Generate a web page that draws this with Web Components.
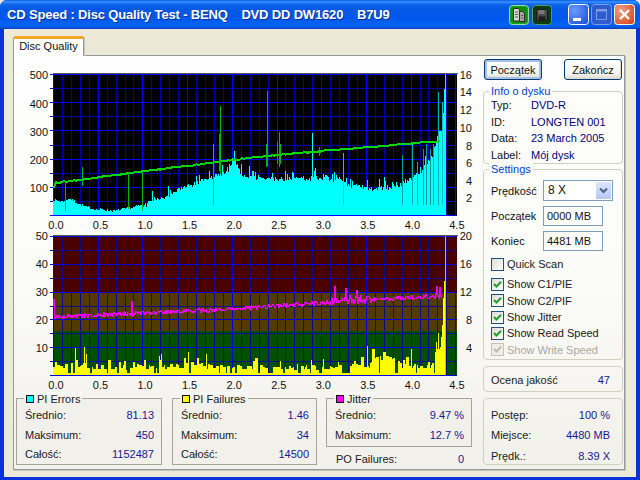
<!DOCTYPE html>
<html lang="pl"><head><meta charset="utf-8"><title>CD Speed</title>
<style>
html,body{margin:0;padding:0;width:640px;height:480px;overflow:hidden;background:#ECE9D8}
body{font:11px "Liberation Sans",Arial,sans-serif;color:#000}
</style></head><body>
<xp-window>
  <xp-tabs label="Disc Quality">
    <div style="display:grid;grid-template-columns:467px 140px;height:100%">
      <div style="padding-top:8px">
        <disc-chart kind="pi"></disc-chart>
        <disc-chart kind="pif"></disc-chart>
        <div style="display:flex;margin-top:6px;align-items:flex-start">
          <stat-group label="PI Errors" swatch="#00ffff" style="width:146px;height:67px">
            <kv-row k="Średnio:" v="81.13"></kv-row><kv-row k="Maksimum:" v="450"></kv-row><kv-row k="Całość:" v="1152487"></kv-row>
          </stat-group>
          <stat-group label="PI Failures" swatch="#ffff00" style="width:145px;height:67px;margin-left:10px">
            <kv-row k="Średnio:" v="1.46"></kv-row><kv-row k="Maksimum:" v="34"></kv-row><kv-row k="Całość:" v="14500"></kv-row>
          </stat-group>
          <div style="margin-left:9px;width:146px">
            <stat-group label="Jitter" swatch="#ff00ff" style="height:49px">
              <kv-row k="Średnio:" v="9.47 %"></kv-row><kv-row k="Maksimum:" v="12.7 %"></kv-row>
            </stat-group>
            <kv-row k="PO Failures:" v="0" style="margin:4px 8px 0 10px"></kv-row>
          </div>
        </div>
      </div>
      <div>
        <div style="display:flex;justify-content:space-between;padding:0 1px;height:21px">
          <xp-button default style="width:58px">Początek</xp-button>
          <xp-button style="width:58px">Zakończ</xp-button>
        </div>
        <round-group label="Info o dysku" style="height:73px;margin-top:11px;--pt:5px">
          <info-row k="Typ:" v="DVD-R"></info-row><info-row k="ID:" v="LONGTEN 001"></info-row>
          <info-row k="Data:" v="23 March 2005"></info-row><info-row k="Label:" v="Mój dysk"></info-row>
        </round-group>
        <round-group label="Settings" style="height:191px;margin-top:5px;--pt:10px">
          <setting-row label="Prędkość"><xp-select style="width:70px" value="8 X"></xp-select></setting-row>
          <setting-row label="Początek" style="margin-top:5px"><xp-input style="width:60px" value="0000 MB"></xp-input></setting-row>
          <setting-row label="Koniec" style="margin-top:5px"><xp-input style="width:60px" value="4481 MB"></xp-input></setting-row>
          <xp-check style="margin-top:5px">Quick Scan</xp-check>
          <div style="margin-top:4px">
            <xp-check checked>Show C1/PIE</xp-check><xp-check checked>Show C2/PIF</xp-check>
            <xp-check checked>Show Jitter</xp-check><xp-check checked>Show Read Speed</xp-check>
            <xp-check checked disabled>Show Write Speed</xp-check>
          </div>
        </round-group>
        <round-group style="height:26px;margin-top:6px;--pt:5px">
          <kv-row k="Ocena jakość" v="47" style="margin-right:5px;height:16px"></kv-row>
        </round-group>
        <round-group style="height:67px;margin-top:6px;--pt:5.5px">
          <kv-row k="Postęp:" v="100 %" style="margin-right:5px;height:20.5px"></kv-row>
          <kv-row k="Miejsce:" v="4480 MB" style="margin-right:5px;height:20.5px"></kv-row>
          <kv-row k="Prędk.:" v="8.39 X" style="margin-right:5px;height:20.5px"></kv-row>
        </round-group>
      </div>
    </div>
  </xp-tabs>
</xp-window>
<script>
const FONT='"Liberation Sans",Arial,sans-serif';
function def(name,html,init){
  customElements.define(name,class extends HTMLElement{
    constructor(){super();this.attachShadow({mode:'open'});}
    connectedCallback(){
      if(!this._r){this._r=1;this.shadowRoot.innerHTML=typeof html==='function'?html(this):html;}
      if(init)init(this);
    }
  });
}
def('xp-window',()=>`<style>
:host{display:flex;flex-direction:column;width:640px;height:480px;background:#0831D9;border-radius:7px 7px 0 0;overflow:hidden;box-sizing:border-box}
.t{height:29px;flex:none;display:flex;align-items:center;padding:0 5px 0 7px;box-sizing:border-box;color:#fff;
 background:linear-gradient(#0A5BE8 0,#3A93FF 2px,#0F66EE 4px,#0458E4 9px,#0058EC 19px,#0265F3 25px,#0B50D8 28px,#0636B8 29px)}
.n{font:bold 13px "Liberation Sans",Arial,sans-serif;white-space:pre;flex:1;text-shadow:1px 1px 0 #0F2F9E;letter-spacing:-.17px}
svg{display:block}
.c{flex:1;margin:0 4px 3px;background:#ECE9D8;min-height:0}
.ic{display:flex;gap:3px;margin-right:16px}
.wb{display:flex;gap:2px}
</style>
<div class="t"><span class="n">CD Speed : Disc Quality Test - BENQ    DVD DD DW1620    B7U9</span>
<span class="ic">
<svg width="20" height="20" viewBox="0 0 20 20"><rect x=".5" y=".5" width="19" height="19" rx="3" fill="#1CA01E" stroke="#9BDCA0"/><rect x="2" y="2" width="16" height="16" rx="2" fill="#0F8E12"/><path d="M4.500 3.500h5l1 1.500v11h-6z" fill="#D8D8D0" stroke="#2A2A2A"/><path d="M10.500 6.500h3l2 2v8h-5z" fill="#A8A8A0" stroke="#2A2A2A"/><path d="M6 7h3M6 9.500h3M6 12h3M12 10.500h2M12 13h2" stroke="#555"/></svg>
<svg width="20" height="20" viewBox="0 0 20 20"><rect x=".5" y=".5" width="19" height="19" rx="3" fill="#0A3D10" stroke="#5E9A68"/><path d="M4.500 4.500h10l1 1v10h-11z" fill="#4A4A4A" stroke="#1A1A1A"/><rect x="6.500" y="5" width="6" height="4" fill="#7A7A7A"/><rect x="6.500" y="11.500" width="7" height="4" fill="#1E1E1E"/></svg>
</span>
<span class="wb">
<svg width="21" height="21" viewBox="0 0 21 21"><defs><radialGradient id="b" cx=".3" cy=".3" r=".9"><stop offset="0" stop-color="#6D9CF8"/><stop offset="1" stop-color="#1E4FD8"/></radialGradient><radialGradient id="r" cx=".3" cy=".3" r=".9"><stop offset="0" stop-color="#F0A080"/><stop offset="1" stop-color="#D8411A"/></radialGradient></defs><rect x=".5" y=".5" width="20" height="20" rx="3" fill="url(#b)" stroke="#fff"/><rect x="5" y="14" width="8" height="3" fill="#fff"/></svg>
<svg width="21" height="21" viewBox="0 0 21 21"><rect x=".5" y=".5" width="20" height="20" rx="3" fill="#2F5BD0" stroke="#7E9EE8"/><path d="M5.500 5.500h10v10h-10z" fill="none" stroke="#7F9BE4"/><path d="M5 6.500h11" stroke="#7F9BE4" stroke-width="2"/></svg>
<svg width="21" height="21" viewBox="0 0 21 21"><rect x=".5" y=".5" width="20" height="20" rx="3" fill="url(#r)" stroke="#fff"/><path d="M6 6l9 9M15 6l-9 9" stroke="#fff" stroke-width="2.400"/></svg>
</span></div>
<div class="c"><slot></slot></div>`);

def('xp-tabs',h=>`<style>
:host{display:flex;flex-direction:column;height:100%;padding:7px 11px 7px 9px;box-sizing:border-box}
.tab{align-self:flex-start;height:20px;width:71px;box-sizing:border-box;background:#fff;border:1px solid #919B9C;border-bottom:0;border-top:3px solid #F5A623;border-radius:3px 3px 0 0;text-align:center;line-height:15px;position:relative;z-index:1;margin-bottom:-1px;color:#111;box-shadow:1px 0 0 #C8C6B8}
.p{flex:1;min-height:0;box-sizing:border-box;border:1px solid #919B9C;border-bottom-color:#8F9A9B;padding:3px 1px 2px 2px;background:linear-gradient(#FEFEFE 0,#FBFBF9 55%,#F1F0EA 100%);box-shadow:1px 1px 0 #C4C2B4}
</style><div class="tab">${h.getAttribute('label')||''}</div><div class="p"><slot></slot></div>`);

function rng(seed){return()=>{seed|=0;seed=seed+0x6D2B79F5|0;let t=Math.imul(seed^seed>>>15,1|seed);t=t+Math.imul(t^t>>>7,61|t)^t;return((t^t>>>14)>>>0)/4294967296}}
function interp(pts,x){if(x<=pts[0][0])return pts[0][1];for(let i=1;i<pts.length;i++){if(x<=pts[i][0]){const a=pts[i-1],b=pts[i];return a[1]+(b[1]-a[1])*(x-a[0])/(b[0]-a[0])}}return pts[pts.length-1][1]}

function chartSvg(kind){
  const pi=kind==='pi';
  const X0=53,XU=89.4,XE=457,Y0=pi?75:237,Y1=pi?216:376,H=Y1-Y0;
  const top=pi?68:233,ht=pi?165:160;
  let minor='',major='';
  for(let i=0;i<=45;i++){const x=Math.round(X0+i*8.94)+.5;
    if(i%5==0)major+=`M${x} ${Y0}V${Y1}`;else minor+=`M${x} ${Y0}V${Y1}`;}
  for(let i=0;i<=10;i++){const y=Math.round(Y0+i*H/10)+.5;
    if(i%2==0)major+=`M${X0-3} ${y}H${XE}`;else minor+=`M${X0-3} ${y}H${XE}`;}
  let bg='';
  if(pi)bg=`<rect x="${X0}" y="${Y0}" width="${XE-X0}" height="${H}" fill="#000"/>`;
  else bg=`<rect x="${X0}" y="${Y0}" width="${XE-X0}" height="56" fill="#4B0000"/><rect x="${X0}" y="293" width="${XE-X0}" height="39" fill="#523A00"/><rect x="${X0}" y="332" width="${XE-X0}" height="${Y1-332}" fill="#005000"/>`;
  const gridCol=pi?['#0000FF','#0000A8']:['#0000E0','#0B0B88'];
  const grid=`<path d="${minor}" stroke="${gridCol[1]}" fill="none"/><path d="${major}" stroke="${gridCol[0]}" fill="none"/>`;
  let fg='';
  const barX=444;
  if(pi){
    const env=[[0,52],[.1,48],[.18,58],[.3,36],[.45,21],[.7,15],[.85,24],[1,34],[1.2,56],[1.4,88],[1.6,112],[1.8,136],[1.95,155],[2.03,200],[2.1,145],[2.32,128],[2.6,128],[3.06,130],[3.2,125],[3.28,108],[3.55,92],[3.8,100],[3.96,120],[4.1,150],[4.18,180],[4.25,220],[4.31,296],[4.35,300],[4.37,400]];
    const r=rng(7);let d='';
    for(let x=X0;x<=barX;x++){const u=(x-X0)/XU;const e=interp(env,u);
      const n=u<1?(r()-.45)*9:u>4.3?0:(r()<.18?r()*38:(r()-.5)*18);
      const v=Math.max(4,e+n);const y=Y1-v*H/500;d+=`M${x+.5} ${y.toFixed(1)}V${Y1}`;}
    fg+=`<path d="${d}" stroke="#00FFFF" fill="none"/>`;
    const sp=[[213,145,'#00B0B0'],[312,134,'#00FFFF'],[343,154,'#00D0D0'],[402,156,'#00A0A0'],[412,143,'#00B0B0'],[417,163,'#00A8A8'],[423,150,'#00A0A0'],[426,145,'#009898'],[430,150,'#009898'],[433,145,'#00A0A0'],[438,93,'#00B0B0'],[442,103,'#00C8C8'],[444,90,'#00FFFF']];
    sp.forEach(s=>fg+=`<path d="M${s[0]+.5} ${s[1]}V${Y1-10}" stroke="${s[2]}"/>`);
    const ln=[[54,189],[55,184],[240,160],[300,154],[441,142]];
    const r2=rng(12);let pts=[];
    for(let x=54;x<=441;x+=2){let y=interp(ln,x)+(r2()-.5)*1.2;pts.push(x+','+y.toFixed(1));}
    fg+=`<polyline points="${pts.join(' ')}" fill="none" stroke="#00D800" stroke-width="2"/>`;
    const gs=[[65,183,212],[82,168,187],[128,173,210],[142,172,212],[220,107,175],[219,135,172],[267,92,167],[266,145,168],[277,143,165],[279,133,168],[280,145,165],[319,148,157]];
    gs.forEach(s=>fg+=`<path d="M${s[0]+.5} ${s[1]}V${s[2]}" stroke="#00B800"/>`);
  } else {
    const env=[[0,4],[.25,4.6],[.5,3],[1,3.4],[1.5,3.6],[2,3.6],[2.5,3],[3.2,3],[3.5,4.2],[3.7,7],[3.9,4],[4.1,3],[4.22,3],[4.25,6],[4.3,9],[4.33,10],[4.35,17],[4.37,34]];
    const r=rng(21);let d='';let x=X0;
    const pin={75:9.8,84:10,161:7.5,188:8.2,206:7.5,367:10.500,411:9.500,436:12,438:15};
    while(x<=barX){
      const u=(x-X0)/XU;const e=interp(env,u);
      const w=u>4.3?1:1+Math.floor(r()*3);
      const k=r();let v=k<.12?0.7:k<.82?e*(.55+r()*.7):e*(1.2+r()*.8);
      if(u>4.3)v=e;
      for(let i=0;i<w&&x<=barX;i++,x++){
        const vv=pin[x]||v;
        d+=`M${x+.5} ${(Y1-vv*H/50).toFixed(1)}V${Y1}`;
      }
    }
    fg+=`<path d="${d}" stroke="#FFFF00" fill="none"/>`;
    const ln=[[54,318],[240,310],[260,308],[350,302],[440,297]];
    const r2=rng(5);let pts=['54,300','54.500,320'];
    const spk={132:302,335:287,346:289,357:291,350:296,361:296,437:287,440:288,367:298};
    for(let x=55;x<=442;x+=1){let y=interp(ln,x)+(r2()-.5)*(x>330&&x<372?8:4);if(spk[x])y=spk[x];pts.push(x+','+y.toFixed(1));}
    fg+=`<polyline points="${pts.join(' ')}" fill="none" stroke="#F000F0" stroke-width="1.300"/>`;
  }
  const cur=`<path d="M445.500 ${Y0}V${Y1}" stroke="#B0B0B0" stroke-width="1.500"/>`;
  let tx='';
  const ts=`font-family:${FONT};font-size:11.5px`;
  for(let i=0;i<=9;i++){const x=56+i*44.55;
    tx+=`<text x="${x.toFixed(1)}" y="${pi?229.5:390}" text-anchor="middle">${(i/2).toFixed(1)}</text>`;}
  const L=pi?[[500,80],[400,109],[300,137],[200,165],[100,192.500]]:[[50,241],[40,269],[30,297],[20,325],[10,353]];
  L.forEach(l=>tx+=`<text x="48" y="${l[1]}" text-anchor="end">${l[0]}</text>`);
  const R=pi?[[16,80],[14,97],[12,115],[10,133],[8,150.500],[6,168],[4,186],[2,203]]:[[20,241],[16,269],[12,297],[8,325],[4,353]];
  R.forEach(l=>tx+=`<text x="472" y="${l[1]}" text-anchor="end">${l[0]}</text>`);
  return `<svg width="467" height="${ht}" viewBox="16 ${top} 467 ${ht}" shape-rendering="crispEdges" style="display:block;overflow:visible">
  <rect x="${X0}" y="${Y0-1}" width="${XE-X0+1}" height="1" fill="#555"/>${bg}${grid}${fg}${cur}
  <g style="${ts}" fill="#111" shape-rendering="auto">${tx}</g></svg>`;
}
def('disc-chart',h=>`<style>:host{display:block}</style>`+chartSvg(h.getAttribute('kind')));

def('stat-group',h=>`<style>
:host{display:block;box-sizing:border-box;border:1px solid #A5A498;position:relative;padding:6px 7px 0 8px;background:#F1F0EA}
.l{position:absolute;left:7px;top:-7px;height:13px;padding:0 2px;background:linear-gradient(#fbfbf9,#F1F0EA 50%);display:flex;align-items:center;gap:3px;color:#222}
i{display:block;width:6px;height:6px;border:1px solid #111;background:${h.getAttribute('swatch')}}
::slotted(kv-row){height:19.7px}
</style><div class="l"><i></i>${h.getAttribute('label')}</div><slot></slot>`);

def('kv-row',h=>`<style>
:host{display:flex;justify-content:space-between;align-items:center;height:16px;color:#222}
b{font-weight:normal;color:#000090;opacity:.9}
</style><span>${h.getAttribute('k')}</span><b>${h.getAttribute('v')}</b>`);

def('info-row',h=>`<style>
:host{display:grid;grid-template-columns:40px 1fr;align-items:center;height:16.500px;color:#111}
b{font-weight:normal;color:#000080}
</style><span>${h.getAttribute('k')}</span><b>${h.getAttribute('v')}</b>`);

def('round-group',h=>{const l=h.getAttribute('label');return `<style>
:host{display:block;box-sizing:border-box;border:1px solid #D0D0BF;border-radius:4px;position:relative;padding:var(--pt,4px) 7px 0 7px}
.l{position:absolute;left:5px;top:-7px;padding:0 2px;height:13px;line-height:13px;color:#0046D5;background:#FBFBF8}
</style>${l?`<div class="l">${l}</div>`:''}<slot></slot>`});

def('setting-row',h=>`<style>
:host{display:grid;grid-template-columns:52px 1fr;align-items:center;color:#111}
</style><span>${h.getAttribute('label')}</span><slot></slot>`);

def('xp-input',h=>`<style>
:host{display:block;height:20px;box-sizing:border-box;border:1px solid #7F9DB9;background:#fff;padding-left:3px;line-height:18px;color:#111}
</style>${h.getAttribute('value')}`);

def('xp-select',h=>`<style>
:host{display:flex;height:21px;box-sizing:border-box;border:1px solid #7F9DB9;background:#fff;padding:1px;line-height:17px;color:#111;justify-content:space-between;font-size:12px}
span{padding-left:3px}
.a{width:15px;border-radius:1px;background:linear-gradient(#DCE7FB,#B4C8F0);display:flex;align-items:center;justify-content:center}
</style><span>${h.getAttribute('value')}</span><div class="a"><svg width="9" height="7" viewBox="0 0 9 7"><path d="M1 1.500l3.500 3.500 3.500-3.500" fill="none" stroke="#4D6185" stroke-width="2"/></svg></div>`);

def('xp-button',h=>{const d=h.hasAttribute('default');return `<style>
:host{display:flex;align-items:center;justify-content:center;box-sizing:border-box;height:21px;border:1px solid #003C74;border-radius:3px;color:#111;
background:linear-gradient(#FFFFFF,#F4F4EE 70%,#DCD8CE);${d?'box-shadow:inset 0 0 0 2px #A8BFE6;':'box-shadow:inset -1px -1px 0 #DCD8CE;'}}
</style><slot></slot>`});

def('xp-check',h=>{const c=h.hasAttribute('checked'),d=h.hasAttribute('disabled');return `<style>
:host{display:flex;align-items:center;height:16.300px;gap:3px;color:${d?'#AAA89C':'#1a1a1a'}}
.b{width:13px;height:13px;box-sizing:border-box;border:1px solid ${d?'#C5C3B5':'#1C5180'};background:${d?'#EEEDE6':'linear-gradient(135deg,#DCDCD7,#FFFFFF)'};flex:none;display:block}
</style><svg class="b" viewBox="0 0 11 11">${c?`<path d="M2 5l2.500 2.500L9 2.800" fill="none" stroke="${d?'#BDBBAC':'#21A121'}" stroke-width="2"/>`:''}</svg><slot></slot>`});
</script>
</body></html>
